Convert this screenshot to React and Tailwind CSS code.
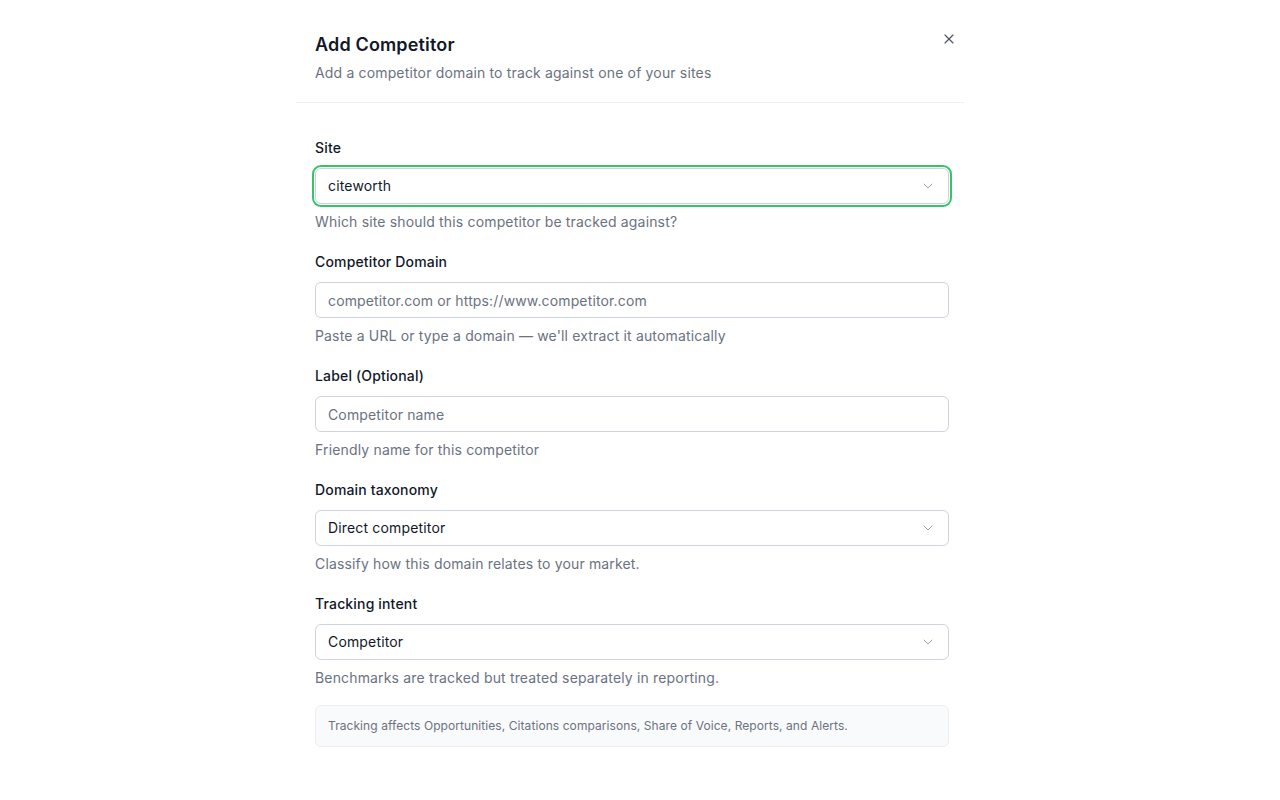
import React from 'react';
import { ChevronDown, X } from 'lucide-react';

function Field({ label, hint, children }) {
    return (
        <div className="flex flex-col">
            <label className="text-sm leading-5 font-medium text-[#111827]">{label}</label>
            <div className="mt-[10px]">{children}</div>
            <p className="mt-2 text-sm leading-5 text-[#6b7280]">{hint}</p>
        </div>
    );
}

function SelectBox({ value, focused }) {
    return (
        <div
            className={
                focused
                    ? 'h-9 w-full flex items-center justify-between rounded-md border border-[#cfd3dc] bg-white pl-3 pr-3 ring-2 ring-[#34c56a] ring-offset-1'
                    : 'h-9 w-full flex items-center justify-between rounded-md border border-[#cfd3dc] bg-white pl-3 pr-3'
            }
        >
            <span className="text-sm text-[#111827]">{value}</span>
            <ChevronDown size={16} strokeWidth={1.5} className="text-[#9ca3af]" />
        </div>
    );
}

function TextBox({ placeholder }) {
    return (
        <input
            type="text"
            placeholder={placeholder}
            className="h-9 w-full rounded-md border border-[#cfd3dc] bg-white px-3 text-sm tracking-[0.01em] text-[#111827] placeholder:text-[#6b7280] outline-none"
        />
    );
}

export default function App() {
    return (
        <div
            className="min-h-[800px] w-full bg-white pl-[296px] tracking-[0.01em]"
            style={{ fontFamily: 'Inter, "Noto Sans", sans-serif' }}
        >
            <div className="w-[668px] flex flex-col">
                <div className="relative pl-[19px] pr-[15px] pt-[31px] pb-[19px] border-b border-[#eeeff2]">
                    <h2 className="text-lg leading-7 font-semibold text-[#111827]">Add Competitor</h2>
                    <p className="mt-1 text-sm leading-5 text-[#6b7280]">
                        Add a competitor domain to track against one of your sites
                    </p>
                    <button className="absolute right-[7px] top-[31px] text-[#4b5563]">
                        <X size={16} strokeWidth={1.75} />
                    </button>
                </div>

                <div className="pl-[19px] pr-[15px] pt-[35px] flex flex-col gap-5">
                    <Field label="Site" hint="Which site should this competitor be tracked against?">
                        <SelectBox value="citeworth" focused />
                    </Field>
                    <Field
                        label="Competitor Domain"
                        hint="Paste a URL or type a domain — we'll extract it automatically"
                    >
                        <TextBox placeholder="competitor.com or https://www.competitor.com" />
                    </Field>
                    <Field label="Label (Optional)" hint="Friendly name for this competitor">
                        <TextBox placeholder="Competitor name" />
                    </Field>
                    <Field label="Domain taxonomy" hint="Classify how this domain relates to your market.">
                        <SelectBox value="Direct competitor" />
                    </Field>
                    <Field label="Tracking intent" hint="Benchmarks are tracked but treated separately in reporting.">
                        <SelectBox value="Competitor" />
                    </Field>
                </div>

                <div className="ml-[19px] mr-[15px] mt-[17px] h-[42px] flex items-center rounded-md border border-[#eceef1] bg-[#f9fafb] px-3">
                    <p className="text-xs tracking-[0.006em] text-[#6b7280]">
                        Tracking affects Opportunities, Citations comparisons, Share of Voice, Reports, and Alerts.
                    </p>
                </div>
            </div>
        </div>
    );
}
